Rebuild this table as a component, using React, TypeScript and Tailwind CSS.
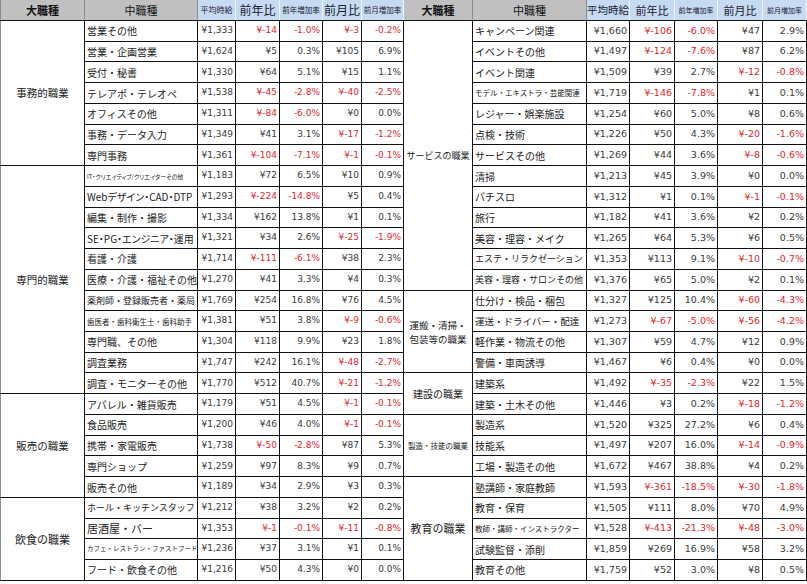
import React from 'react';

type Row = { n: string; a: string; yd: string; yp: string; md: string; mp: string; ns?: string };
type Group = { label: React.ReactNode; ls: string; rows: Row[] };

const R = (n: string, a: string, yd: string, yp: string, md: string, mp: string, ns?: string): Row => ({ n, a, yd, yp, md, mp, ns });

const PALT = "text-[10px] [font-feature-settings:'palt']";

const leftGroups: Group[] = [
  {
    label: '事務的職業',
    ls: 'text-[10.5px]',
    rows: [
      R('営業その他', '¥1,333', '¥-14', '-1.0%', '¥-3', '-0.2%'),
      R('営業・企画営業', '¥1,624', '¥5', '0.3%', '¥105', '6.9%'),
      R('受付・秘書', '¥1,330', '¥64', '5.1%', '¥15', '1.1%'),
      R('テレアポ・テレオペ', '¥1,538', '¥-45', '-2.8%', '¥-40', '-2.5%'),
      R('オフィスその他', '¥1,311', '¥-84', '-6.0%', '¥0', '0.0%'),
      R('事務・データ入力', '¥1,349', '¥41', '3.1%', '¥-17', '-1.2%'),
      R('専門事務', '¥1,361', '¥-104', '-7.1%', '¥-1', '-0.1%'),
    ],
  },
  {
    label: '専門的職業',
    ls: 'text-[10.5px]',
    rows: [
      R('IT・クリエイティブ/クリエイターその他', '¥1,183', '¥72', '6.5%', '¥10', '0.9%', "text-[6px] [font-feature-settings:'palt']"),
      R('Webデザイン・CAD・DTP', '¥1,293', '¥-224', '-14.8%', '¥5', '0.4%', PALT),
      R('編集・制作・撮影', '¥1,334', '¥162', '13.8%', '¥1', '0.1%'),
      R('SE・PG・エンジニア・運用', '¥1,321', '¥34', '2.6%', '¥-25', '-1.9%', PALT),
      R('看護・介護', '¥1,714', '¥-111', '-6.1%', '¥38', '2.3%'),
      R('医療・介護・福祉その他', '¥1,270', '¥41', '3.3%', '¥4', '0.3%'),
      R('薬剤師・登録販売者・薬局', '¥1,769', '¥254', '16.8%', '¥76', '4.5%', 'text-[9px]'),
      R('歯医者・歯科衛生士・歯科助手', '¥1,381', '¥51', '3.8%', '¥-9', '-0.6%', 'text-[7.5px]'),
      R('専門職、その他', '¥1,304', '¥118', '9.9%', '¥23', '1.8%'),
      R('調査業務', '¥1,747', '¥242', '16.1%', '¥-48', '-2.7%'),
      R('調査・モニターその他', '¥1,770', '¥512', '40.7%', '¥-21', '-1.2%'),
    ],
  },
  {
    label: '販売の職業',
    ls: 'text-[10.5px]',
    rows: [
      R('アパレル・雑貨販売', '¥1,179', '¥51', '4.5%', '¥-1', '-0.1%'),
      R('食品販売', '¥1,200', '¥46', '4.0%', '¥-1', '-0.1%'),
      R('携帯・家電販売', '¥1,738', '¥-50', '-2.8%', '¥87', '5.3%'),
      R('専門ショップ', '¥1,259', '¥97', '8.3%', '¥9', '0.7%'),
      R('販売その他', '¥1,189', '¥34', '2.9%', '¥3', '0.3%'),
    ],
  },
  {
    label: '飲食の職業',
    ls: 'text-[11px]',
    rows: [
      R('ホール・キッチンスタッフ', '¥1,212', '¥38', '3.2%', '¥2', '0.2%', 'text-[9px]'),
      R('居酒屋・バー', '¥1,353', '¥-1', '-0.1%', '¥-11', '-0.8%', 'text-[11px]'),
      R('カフェ・レストラン・ファストフード', '¥1,236', '¥37', '3.1%', '¥1', '0.1%', "text-[6.5px]"),
      R('フード・飲食その他', '¥1,216', '¥50', '4.3%', '¥0', '0.0%'),
    ],
  },
];

const rightGroups: Group[] = [
  {
    label: 'サービスの職業',
    ls: 'text-[9px]',
    rows: [
      R('キャンペーン関連', '¥1,660', '¥-106', '-6.0%', '¥47', '2.9%'),
      R('イベントその他', '¥1,497', '¥-124', '-7.6%', '¥87', '6.2%'),
      R('イベント関連', '¥1,509', '¥39', '2.7%', '¥-12', '-0.8%'),
      R('モデル・エキストラ・芸能関連', '¥1,719', '¥-146', '-7.8%', '¥1', '0.1%', 'text-[7.5px]'),
      R('レジャー・娯楽施設', '¥1,254', '¥60', '5.0%', '¥8', '0.6%'),
      R('点検・技術', '¥1,226', '¥50', '4.3%', '¥-20', '-1.6%'),
      R('サービスその他', '¥1,269', '¥44', '3.6%', '¥-8', '-0.6%'),
      R('清掃', '¥1,213', '¥45', '3.9%', '¥0', '0.0%'),
      R('パチスロ', '¥1,312', '¥1', '0.1%', '¥-1', '-0.1%'),
      R('旅行', '¥1,182', '¥41', '3.6%', '¥2', '0.2%'),
      R('美容・理容・メイク', '¥1,265', '¥64', '5.3%', '¥6', '0.5%'),
      R('エステ・リラクゼーション', '¥1,353', '¥113', '9.1%', '¥-10', '-0.7%', 'text-[9px]'),
      R('美容・理容・サロンその他', '¥1,376', '¥65', '5.0%', '¥2', '0.1%', 'text-[9px]'),
    ],
  },
  {
    label: (
      <>
        運搬・清掃・
        <br />
        包装等の職業
      </>
    ),
    ls: 'text-[9.5px] leading-[14px]',
    rows: [
      R('仕分け・検品・梱包', '¥1,327', '¥125', '10.4%', '¥-60', '-4.3%'),
      R('運送・ドライバー・配達', '¥1,273', '¥-67', '-5.0%', '¥-56', '-4.2%', 'text-[9.5px]'),
      R('軽作業・物流その他', '¥1,307', '¥59', '4.7%', '¥12', '0.9%'),
      R('警備・車両誘導', '¥1,467', '¥6', '0.4%', '¥0', '0.0%'),
    ],
  },
  {
    label: '建設の職業',
    ls: 'text-[10px]',
    rows: [
      R('建築系', '¥1,492', '¥-35', '-2.3%', '¥22', '1.5%'),
      R('建築・土木その他', '¥1,446', '¥3', '0.2%', '¥-18', '-1.2%'),
    ],
  },
  {
    label: '製造・技能の職業',
    ls: 'text-[7.5px]',
    rows: [
      R('製造系', '¥1,520', '¥325', '27.2%', '¥6', '0.4%'),
      R('技能系', '¥1,497', '¥207', '16.0%', '¥-14', '-0.9%'),
      R('工場・製造その他', '¥1,672', '¥467', '38.8%', '¥4', '0.2%'),
    ],
  },
  {
    label: '教育の職業',
    ls: 'text-[11px]',
    rows: [
      R('塾講師・家庭教師', '¥1,593', '¥-361', '-18.5%', '¥-30', '-1.8%'),
      R('教育・保育', '¥1,505', '¥111', '8.0%', '¥70', '4.9%'),
      R('教師・講師・インストラクター', '¥1,528', '¥-413', '-21.3%', '¥-48', '-3.0%', 'text-[7.5px]'),
      R('試験監督・添削', '¥1,859', '¥269', '16.9%', '¥58', '3.2%'),
      R('教育その他', '¥1,759', '¥52', '3.0%', '¥8', '0.5%'),
    ],
  },
];

type Side = {
  w: string[];
  num: string;
  head: string[];
  groups: Group[];
  first: boolean;
};

const LEFT: Side = {
  w: ['w-[85px]', 'w-[113px]', 'w-[38px]', 'w-[44px]', 'w-[43px]', 'w-[39px]', 'w-[42px]'],
  num: 'text-[9px]',
  head: ['text-[11px] font-bold', 'text-[11px]', 'text-[8px]', 'text-[12px]', 'text-[7.5px]', 'text-[12px]', 'text-[7.5px]'],
  groups: leftGroups,
  first: true,
};

const RIGHT: Side = {
  w: ['w-[69px]', 'w-[114px]', 'w-[43px]', 'w-[45px]', 'w-[43px]', 'w-[45px]', 'w-[44px]'],
  num: 'text-[9.5px]',
  head: ['text-[11px] font-bold', 'text-[11px]', 'text-[10.5px]', 'text-[11px]', 'text-[7px]', 'text-[11px]', 'text-[7px]'],
  groups: rightGroups,
  first: false,
};

const HEADS = ['大職種', '中職種', '平均時給', '前年比', '前年増加率', '前月比', '前月増加率'];

const jp = "font-['Noto_Sans_CJK_JP',sans-serif]";
const numFont = "font-['DejaVu_Sans',sans-serif]";

function NumCell({ v, w, size }: { v: string; w: string; size: string }) {
  const neg = v.includes('-');
  return (
    <div
      className={`${w} shrink-0 h-full flex items-center justify-end pr-[2px] border-r border-[#111] ${numFont} ${size} ${
        neg ? 'text-[#e4262c]' : 'text-[#3a3a3a]'
      }`}
    >
      {v}
    </div>
  );
}

function Table({ s }: { s: Side }) {
  return (
    <div className="flex flex-col">
      <div className="flex h-[21px] border-b border-[#111]">
        {HEADS.map((h, i) => (
          <div
            key={h}
            className={`${s.w[i]} shrink-0 h-full flex items-center justify-center ${jp} ${s.head[i]} whitespace-nowrap ${
              i < 2 ? 'bg-[#c0c0c0] text-[#111] border-r border-[#8c8c8c]' : 'bg-[#c6daf2] text-[#1a2030] border-r border-[#eef4fb]'
            } ${i === 0 && s.first ? 'border-l border-l-[#8c8c8c]' : ''}`}
          >
            {h}
          </div>
        ))}
      </div>
      {s.groups.map((g, gi) => (
        <div key={gi} className="flex">
          <div
            className={`${s.w[0]} shrink-0 flex items-center justify-center text-center border-r border-b border-[#111] ${
              s.first ? 'border-l border-l-[#8c8c8c]' : ''
            } ${jp} ${g.ls} text-[#222] whitespace-nowrap`}
          >
            <span>{g.label}</span>
          </div>
          <div className="flex flex-col">
            {g.rows.map((r) => (
              <div key={r.n} className="flex h-[20.74px] border-b border-[#111]">
                <div
                  className={`${s.w[1]} shrink-0 h-full flex items-center pl-[2px] border-r border-[#111] overflow-hidden whitespace-nowrap ${jp} text-[#222] ${
                    r.ns ?? 'text-[10px]'
                  }`}
                >
                  {r.n}
                </div>
                <NumCell v={r.a} w={s.w[2]} size={s.num} />
                <NumCell v={r.yd} w={s.w[3]} size={s.num} />
                <NumCell v={r.yp} w={s.w[4]} size={s.num} />
                <NumCell v={r.md} w={s.w[5]} size={s.num} />
                <NumCell v={r.mp} w={s.w[6]} size={s.num} />
              </div>
            ))}
          </div>
        </div>
      ))}
    </div>
  );
}

export default function App() {
  return (
    <div className="w-[807px] h-[584px] overflow-hidden bg-white">
      <div className="flex">
        <Table s={LEFT} />
        <Table s={RIGHT} />
      </div>
    </div>
  );
}
